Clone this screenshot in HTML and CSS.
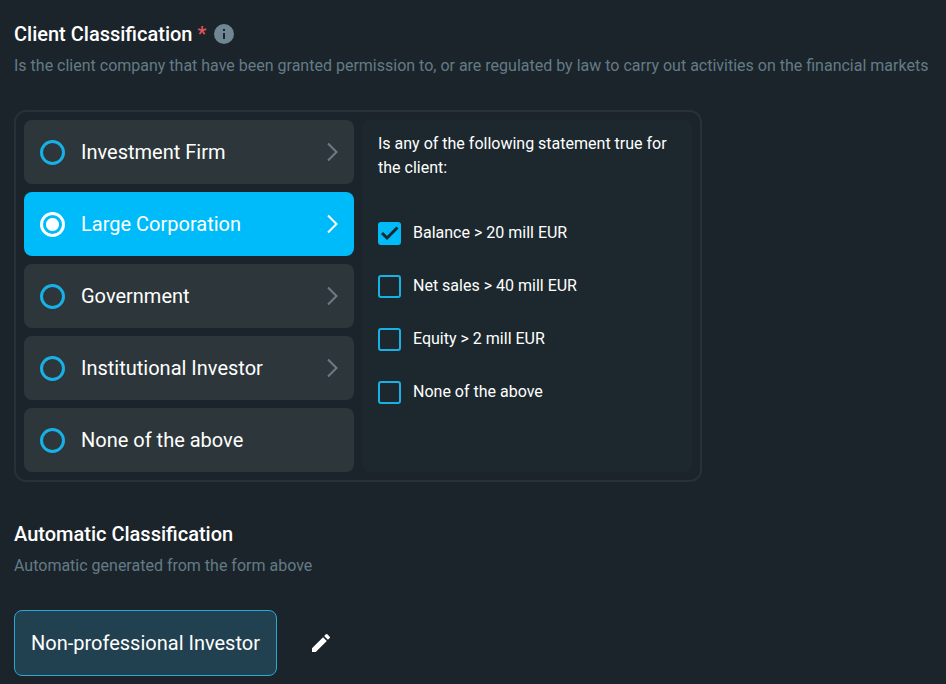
FILE: index.html
```html
<!DOCTYPE html>
<html lang="en">
<head>
  <meta charset="UTF-8">
  <meta name="viewport" content="width=device-width, initial-scale=1.0">
  <title>Client Classification</title>
  <link rel="stylesheet" href="styles.css">
</head>
<body>
  <main class="page">
    <section class="section">
      <div class="heading">
        <h2 id="clientTitle">Client Classification <span class="required">*</span></h2>
        <button type="button" class="info" aria-label="More information">
          <svg width="20" height="20" viewBox="0 0 20 20">
            <circle cx="10" cy="10" r="10" fill="#6f8794"/>
            <path d="M9 5h2v2H9zM9 9h2v6H9z" fill="#1b242a"/>
          </svg>
        </button>
      </div>
      <p class="description">Is the client company that have been granted permission to, or are regulated by law to carry out activities on the financial markets</p>

      <form class="classification">
        <div class="options" role="radiogroup" aria-labelledby="clientTitle">
          <label class="option">
            <input type="radio" name="classification" value="investment">
            <span>Investment Firm</span>
            <svg class="chevron" width="10" height="20" viewBox="0 0 10 20"><path d="M0 1.5 8.500 10 0 18.500"/></svg>
          </label>
          <label class="option">
            <input type="radio" name="classification" value="corporation" checked>
            <span>Large Corporation</span>
            <svg class="chevron" width="10" height="20" viewBox="0 0 10 20"><path d="M0 1.5 8.500 10 0 18.500"/></svg>
          </label>
          <label class="option">
            <input type="radio" name="classification" value="government">
            <span>Government</span>
            <svg class="chevron" width="10" height="20" viewBox="0 0 10 20"><path d="M0 1.5 8.500 10 0 18.500"/></svg>
          </label>
          <label class="option">
            <input type="radio" name="classification" value="institutional">
            <span>Institutional Investor</span>
            <svg class="chevron" width="10" height="20" viewBox="0 0 10 20"><path d="M0 1.5 8.500 10 0 18.500"/></svg>
          </label>
          <label class="option">
            <input type="radio" name="classification" value="none">
            <span>None of the above</span>
          </label>
        </div>

        <fieldset class="statements">
          <legend>Is any of the following statement true for the client:</legend>
          <div class="checks">
            <label class="check">
              <span class="box">
                <input type="checkbox" name="balance" checked>
                <svg width="23" height="23" viewBox="0 0 23 23"><path d="M4 11 9 16 19.500 5.500"/></svg>
              </span>
              <span>Balance &gt; 20 mill EUR</span>
            </label>
            <label class="check">
              <span class="box">
                <input type="checkbox" name="sales">
                <svg width="23" height="23" viewBox="0 0 23 23"><path d="M4 11 9 16 19.500 5.500"/></svg>
              </span>
              <span>Net sales &gt; 40 mill EUR</span>
            </label>
            <label class="check">
              <span class="box">
                <input type="checkbox" name="equity">
                <svg width="23" height="23" viewBox="0 0 23 23"><path d="M4 11 9 16 19.500 5.500"/></svg>
              </span>
              <span>Equity &gt; 2 mill EUR</span>
            </label>
            <label class="check">
              <span class="box">
                <input type="checkbox" name="none">
                <svg width="23" height="23" viewBox="0 0 23 23"><path d="M4 11 9 16 19.500 5.500"/></svg>
              </span>
              <span>None of the above</span>
            </label>
          </div>
        </fieldset>
      </form>
    </section>

    <section class="section">
      <div class="heading">
        <h2>Automatic Classification</h2>
      </div>
      <p class="description">Automatic generated from the form above</p>
      <div class="result">
        <output class="result-value">Non-professional Investor</output>
        <button type="button" class="edit" aria-label="Edit classification">
          <svg width="24" height="24" viewBox="0 0 24 24"><path fill="#fff" d="M3 17.250V21h3.750L17.810 9.940l-3.750-3.750L3 17.250zM20.710 7.040a1 1 0 0 0 0-1.410l-2.340-2.340a1 1 0 0 0-1.410 0l-1.830 1.830 3.750 3.750 1.830-1.830z"/></svg>
        </button>
      </div>
    </section>
  </main>
</body>
</html>
```

FILE: styles.css
```css
* {
  box-sizing: border-box;
}

body {
  margin: 0;
  background-color: #1b242a;
  color: #fff;
  font-family: Roboto, "Liberation Sans", sans-serif;
  font-size: 16px;
  line-height: 24px;
}

.page {
  display: flex;
  flex-direction: column;
  gap: 40px;
  padding: 22px 14px 8px;
}

.heading {
  display: flex;
  align-items: center;
  gap: 8px;
}

h2 {
  margin: 0;
  font-size: 20px;
  font-weight: 500;
}

.required {
  color: #e0575b;
}

.info,
.edit {
  display: flex;
  padding: 0;
  border: none;
  background: none;
  cursor: pointer;
}

.description {
  margin: 8px 0 32px;
  color: #647b87;
}

/* Client classification form */
.classification {
  display: grid;
  grid-template-columns: 1fr 1fr;
  gap: 8px;
  max-width: 688px;
  padding: 8px;
  border: 2px solid #263238;
  border-radius: 12px;
}

.options {
  display: flex;
  flex-direction: column;
  gap: 8px;
}

.option {
  display: flex;
  align-items: center;
  gap: 16px;
  height: 64px;
  padding: 0 16px;
  border-radius: 8px;
  background-color: #2d373b;
  font-size: 20px;
  cursor: pointer;
}

.option input {
  appearance: none;
  flex: none;
  width: 25px;
  height: 25px;
  margin: 0;
  border: 3px solid #17b1e6;
  border-radius: 50%;
}

.option input:checked {
  border-color: #fff;
  background: radial-gradient(circle, #fff 6px, transparent 7px);
}

.option:has(input:checked) {
  background-color: #00bbfa;
}

.chevron {
  margin-left: auto;
  overflow: visible;
  fill: none;
  stroke: #6d7c84;
  stroke-width: 2;
}

.option:has(input:checked) .chevron {
  stroke: #fff;
}

.statements {
  min-width: 0;
  margin: 0;
  padding: 12px 16px;
  border: none;
  border-radius: 8px;
  background-color: #1c282e;
}

.statements legend {
  float: left;
  width: 100%;
  padding: 0;
}

.checks {
  clear: both;
  display: flex;
  flex-direction: column;
  gap: 29px;
  padding-top: 41px;
}

.check {
  display: flex;
  align-items: center;
  gap: 12px;
  cursor: pointer;
}

.box {
  display: grid;
}

.box input,
.box svg {
  grid-area: 1 / 1;
}

.box input {
  appearance: none;
  width: 23px;
  height: 23px;
  margin: 0;
  border: 2px solid #17b1e6;
  border-radius: 3px;
}

.box input:checked {
  border-color: #00bbfa;
  background-color: #00bbfa;
}

.box svg {
  display: none;
  fill: none;
  stroke: #1c282e;
  stroke-width: 3;
  pointer-events: none;
}

.box input:checked + svg {
  display: block;
}

/* Automatic classification */
.result {
  display: flex;
  align-items: center;
  gap: 32px;
}

.result-value {
  padding: 20px 16px;
  border: 1px solid #2ba8d3;
  border-radius: 8px;
  background-color: #224150;
  font-size: 20px;
}
```
